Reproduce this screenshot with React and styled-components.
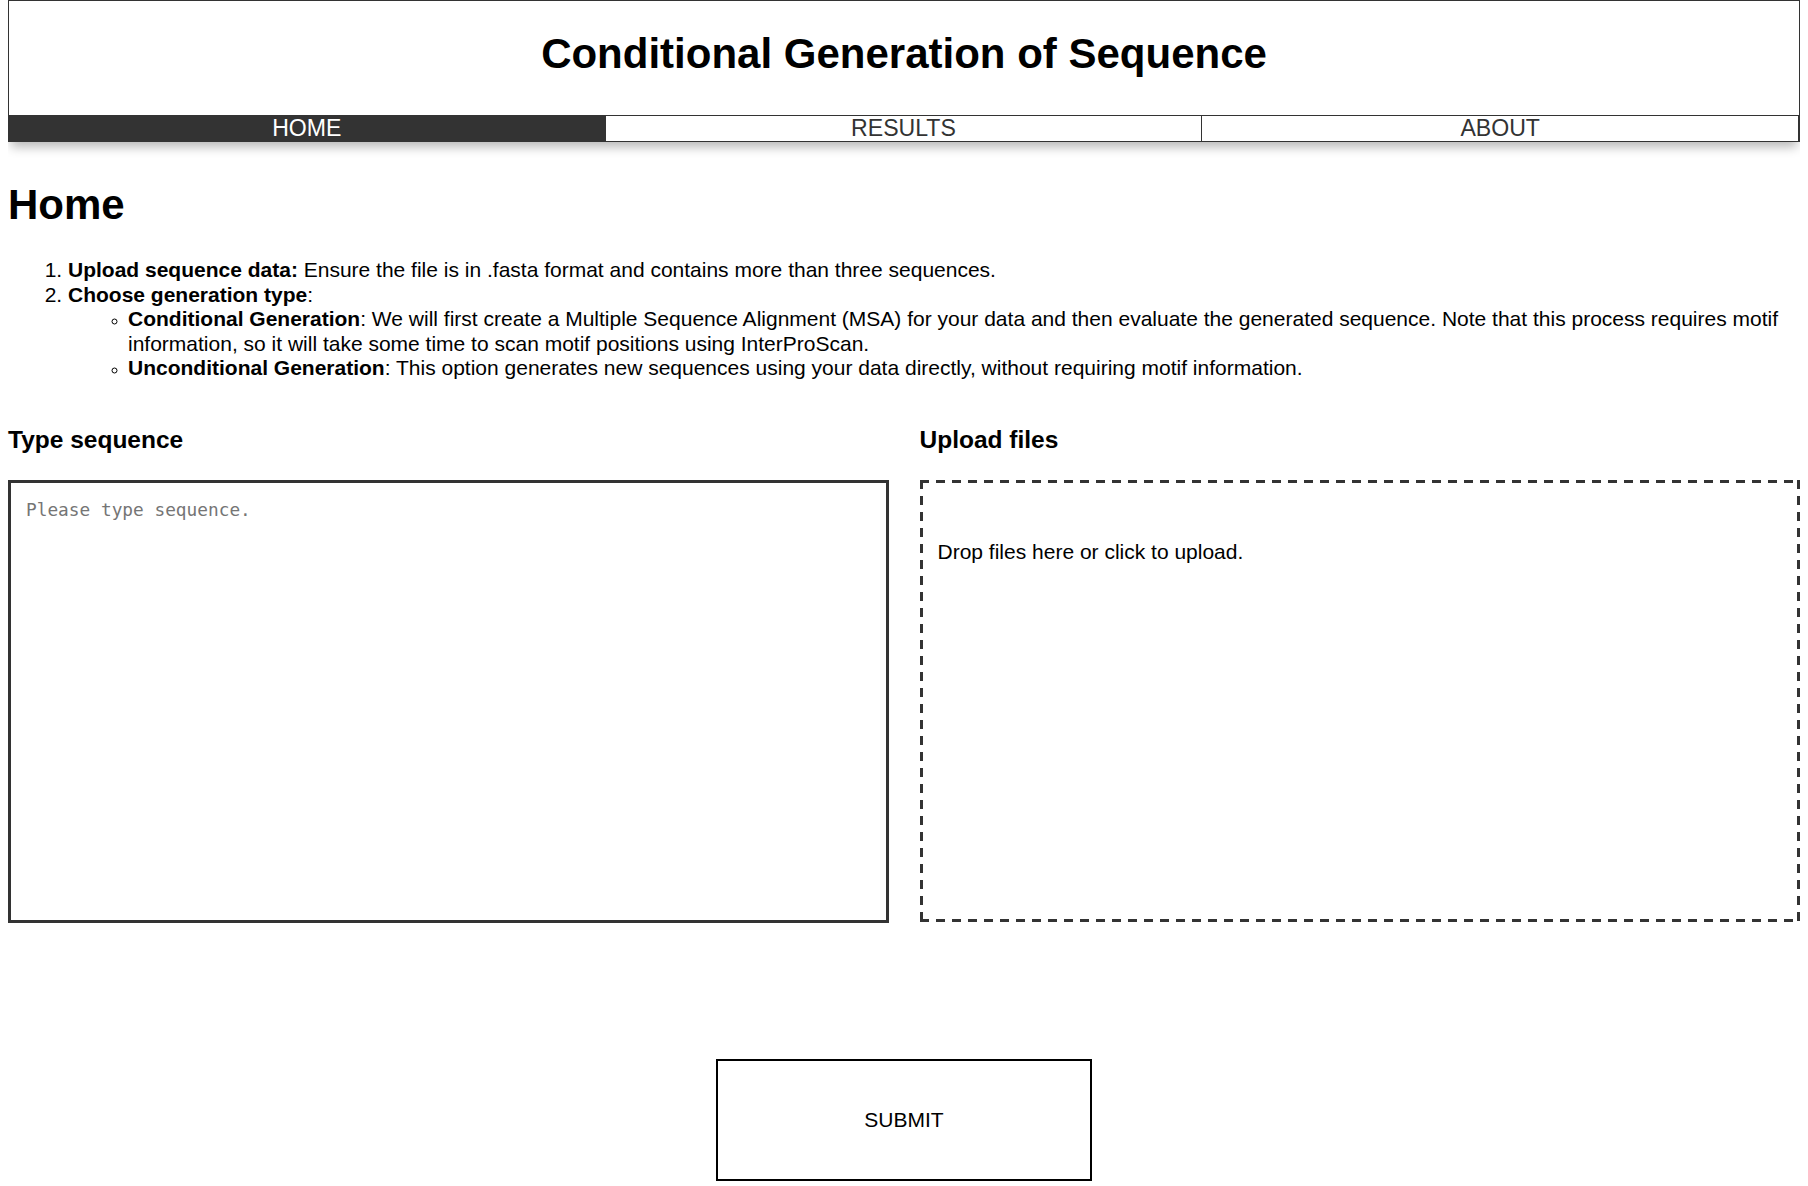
import React from "react";
import styled, { createGlobalStyle } from "styled-components";

const Global = createGlobalStyle`
  html, body { margin: 0; padding: 0; background: #fff; }
  body {
    margin: 0 8px;
    font-family: "Liberation Sans", Arial, sans-serif;
    font-size: 21px;
    color: #000;
  }
  * { box-sizing: border-box; }
`;

const Header = styled.header`
  border: 1px solid #333;
  border-bottom: none;
  box-shadow: 0 8px 10px -3px rgba(0, 0, 0, 0.28);
`;

const Title = styled.h1`
  margin: 0;
  padding: 29px 0 37px;
  text-align: center;
  font-size: 42px;
  line-height: 48px;
  font-weight: 700;
`;

const Nav = styled.nav`
  display: grid;
  grid-template-columns: repeat(3, 1fr);
  border-top: 1px solid #333;
  border-bottom: 1px solid #333;
  margin: 0 -1px;
  border-right: 2px solid #333;
`;

const NavItem = styled.a`
  display: block;
  text-align: center;
  font-size: 23.1px;
  line-height: 25px;
  text-decoration: none;
  cursor: pointer;
  color: ${(p) => (p.$active ? "#fff" : "#333")};
  background: ${(p) => (p.$active ? "#333" : "#fff")};
  border-left: 1px solid #333;
`;

const Main = styled.main`
  padding-top: 39px;
`;

const PageTitle = styled.h1`
  margin: 0;
  font-size: 42px;
  line-height: 48px;
  font-weight: 700;
`;

const Steps = styled.ol`
  margin: 29px 0 0;
  padding-left: 60px;
  line-height: 24.6px;
`;

const SubList = styled.ul`
  margin: 0;
  padding-left: 60px;
  list-style-type: circle;
  li::marker { font-size: 15px; }
`;

const Columns = styled.div`
  display: grid;
  grid-template-columns: 1fr 1fr;
  column-gap: 31px;
  margin-top: 45px;
`;

const Column = styled.section`
  display: flex;
  flex-direction: column;
`;

const SectionTitle = styled.h3`
  margin: 0 0 26px;
  font-size: 24.5px;
  line-height: 28px;
  font-weight: 700;
`;

const SeqInput = styled.textarea`
  display: block;
  width: 100%;
  height: 443px;
  border: 3px solid #333;
  padding: 16px 15px;
  font-family: "DejaVu Sans Mono", "Liberation Mono", monospace;
  font-size: 17.8px;
  line-height: 22px;
  resize: none;
  outline: none;
  &::placeholder { color: #757575; }
`;

const DropZone = styled.div`
  height: 442px;
  padding: 60px 18px 18px;
  font-size: 21px;
  line-height: 24px;
  cursor: pointer;
  background:
    repeating-linear-gradient(90deg, #333 0 9px, transparent 9px 16px) top left / 100% 3px no-repeat,
    repeating-linear-gradient(90deg, #333 0 9px, transparent 9px 16px) bottom left / 100% 3px no-repeat,
    repeating-linear-gradient(180deg, #333 0 9px, transparent 9px 16px) top left / 3px 100% no-repeat,
    repeating-linear-gradient(180deg, #333 0 9px, transparent 9px 16px) top right / 3px 100% no-repeat;
`;

const SubmitRow = styled.div`
  display: flex;
  justify-content: center;
  margin-top: 136px;
`;

const SubmitButton = styled.button`
  width: 376px;
  height: 122px;
  background: #fff;
  border: 2px solid #000;
  font-family: "Liberation Sans", Arial, sans-serif;
  font-size: 21px;
  color: #000;
  cursor: pointer;
`;

export default function App() {
  return (
    <>
      <Global />
      <Header>
        <Title>Conditional Generation of Sequence</Title>
        <Nav>
          <NavItem $active>HOME</NavItem>
          <NavItem>RESULTS</NavItem>
          <NavItem>ABOUT</NavItem>
        </Nav>
      </Header>
      <Main>
        <PageTitle>Home</PageTitle>
        <Steps>
          <li>
            <b>Upload sequence data:</b> Ensure the file is in .fasta format and contains more than three sequences.
          </li>
          <li>
            <b>Choose generation type</b>:
            <SubList>
              <li>
                <b>Conditional Generation</b>: We will first create a Multiple Sequence Alignment (MSA) for your data and then evaluate the generated sequence. Note that this process requires motif information, so it will take some time to scan motif positions using InterProScan.
              </li>
              <li>
                <b>Unconditional Generation</b>: This option generates new sequences using your data directly, without requiring motif information.
              </li>
            </SubList>
          </li>
        </Steps>
        <Columns>
          <Column>
            <SectionTitle>Type sequence</SectionTitle>
            <SeqInput placeholder="Please type sequence." />
          </Column>
          <Column>
            <SectionTitle>Upload files</SectionTitle>
            <DropZone>Drop files here or click to upload.</DropZone>
          </Column>
        </Columns>
        <SubmitRow>
          <SubmitButton>SUBMIT</SubmitButton>
        </SubmitRow>
      </Main>
    </>
  );
}
